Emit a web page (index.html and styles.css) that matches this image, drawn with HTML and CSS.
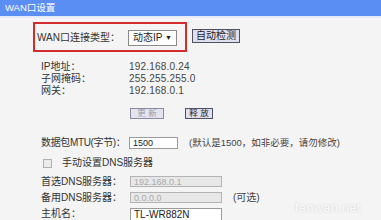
FILE: index.html
```html
<!DOCTYPE html>
<html lang="zh-CN">
<head>
<meta charset="utf-8">
<title>WAN口设置</title>
<link rel="stylesheet" href="styles.css">
</head>
<body>
<div class="hdr">WAN口设置</div>
<div class="main">
  <div class="row r-type">
    <div class="hl">
      <span class="lbl-t">WAN口连接类型：</span>
      <div class="sel"><span class="sel-t">动态IP</span><span class="arr">▼</span></div>
    </div>
    <span class="btn b-auto">自动检测</span>
  </div>

  <div class="info">
    <div class="row r-info"><span class="lbl">IP地址：</span><span class="val">192.168.0.24</span></div>
    <div class="row r-info"><span class="lbl">子网掩码：</span><span class="val">255.255.255.0</span></div>
    <div class="row r-info"><span class="lbl">网关：</span><span class="val">192.168.0.1</span></div>
  </div>

  <div class="row r-btns">
    <span class="btn b-upd dis">更 新</span>
    <span class="btn b-rel">释 放</span>
  </div>

  <div class="row r-mtu">
    <span class="lbl lbl-tight">数据包MTU(字节)：</span>
    <span class="inp i-mtu">1500</span>
    <span class="hint">(默认是1500，如非必要，请勿修改)</span>
  </div>

  <div class="row r-chk">
    <span class="chk"></span>
    <span class="chk-t">手动设置DNS服务器</span>
  </div>

  <div class="row r-dns1">
    <span class="lbl">首选DNS服务器：</span>
    <span class="inp i-wide off">192.168.0.1</span>
  </div>
  <div class="row r-dns2">
    <span class="lbl">备用DNS服务器：</span>
    <span class="inp i-wide off">0.0.0.0</span>
    <span class="opt">(可选)</span>
  </div>
  <div class="row r-host">
    <span class="lbl">主机名：</span>
    <span class="inp i-wide i-host">TL-WR882N</span>
  </div>
</div>
<div class="wm">fanwan.net</div>
</body>
</html>
```

FILE: styles.css
```css
html, body {
  margin: 0;
  padding: 0;
}
body {
  width: 381px;
  height: 220px;
  overflow: hidden;
  background: #f4f4f4;
  font-family: "Liberation Sans", "Noto Sans CJK SC", sans-serif;
  font-size: 10px;
  line-height: 12px;
  color: #333;
  position: relative;
}
.hdr {
  height: 16px;
  line-height: 16px;
  background: #5a8ef3;
  color: #fff;
  font-size: 9.5px;
  padding-left: 5px;
  border-bottom: 2px solid #e4ebf6;
}
.main {
  padding: 4px 0 0 41px;
}
.row {
  display: flex;
  align-items: center;
  white-space: nowrap;
}
.r-type {
  height: 30px;
}
.hl {
  margin-left: -8px;
  width: 154px;
  height: 30px;
  box-sizing: border-box;
  border: 2px solid #d42c2c;
  display: flex;
  align-items: center;
  padding-left: 2px;
  padding-top: 1px;
}
.lbl-t {
  width: 91px;
  flex: none;
}
.sel {
  width: 49px;
  height: 16px;
  box-sizing: border-box;
  border: 1px solid #8a8a8a;
  background: #fff;
  display: flex;
  align-items: center;
  padding-left: 4px;
  color: #222;
}
.sel-t {
  font-size: 10px;
}
.arr {
  margin-left: auto;
  margin-right: 4px;
  font-size: 7px;
  line-height: 8px;
  color: #222;
}
.btn {
  display: flex;
  align-items: center;
  justify-content: center;
  box-sizing: border-box;
  background: #dedff0;
  border: 1px solid #505060;
  color: #222;
}
.b-auto {
  margin-left: 5px;
  width: 48px;
  height: 14px;
  margin-top: -2px;
  font-size: 10px;
}
.info {
  margin-top: 9px;
}
.r-info {
  height: 12px;
}
.lbl {
  width: 88px;
  flex: none;
}
.lbl-tight {
  letter-spacing: -0.35px;
}
.val {
  color: #444;
  letter-spacing: 0.2px;
}
.r-btns {
  margin-top: 11px;
  height: 11px;
}
.b-upd {
  margin-left: 89px;
  width: 34px;
  height: 11px;
  font-size: 8.5px;
  line-height: 9px;
}
.b-upd.dis {
  color: #9a9aa8;
  border-color: #8a8aa0;
  background: #e4e4f0;
}
.b-rel {
  margin-left: 21px;
  width: 28px;
  height: 11px;
  font-size: 8.5px;
  line-height: 9px;
}
.r-mtu {
  margin-top: 18px;
  height: 12px;
}
.inp {
  box-sizing: border-box;
  border: 1px solid #9a9a9a;
  background: #fff;
  font-size: 9px;
  line-height: 10px;
  color: #222;
  display: flex;
  align-items: center;
  padding-left: 3px;
}
.i-mtu {
  width: 49px;
  height: 12px;
}
.hint {
  margin-left: 11px;
  color: #444;
  font-size: 9.5px;
}
.r-chk {
  margin-top: 8px;
  height: 12px;
}
.chk {
  margin-left: 2px;
  width: 9px;
  height: 9px;
  box-sizing: border-box;
  border: 1px solid #b0b0b0;
  background: #ececec;
}
.chk-t {
  margin-left: 10px;
}
.r-dns1 {
  margin-top: 7px;
  height: 11px;
}
.r-dns2 {
  margin-top: 5px;
  height: 11px;
}
.r-host {
  margin-top: 5px;
  height: 12px;
}
.i-wide {
  width: 92px;
  height: 100%;
  margin-left: 1px;
}
.off {
  background: #e8e8e8;
  color: #aaa;
  border-color: #b4b4b4;
}
.i-host {
  color: #222;
  font-size: 10px;
  height: 13px;
  align-self: flex-start;
}
.opt {
  margin-left: 11px;
  color: #444;
}
.wm {
  position: absolute;
  left: 295px;
  top: 201px;
  font-size: 13px;
  line-height: 14px;
  color: rgba(255, 255, 255, 0.9);
  text-shadow: 0 0 2px rgba(120, 120, 120, 0.35);
  letter-spacing: 0.2px;
}
```
